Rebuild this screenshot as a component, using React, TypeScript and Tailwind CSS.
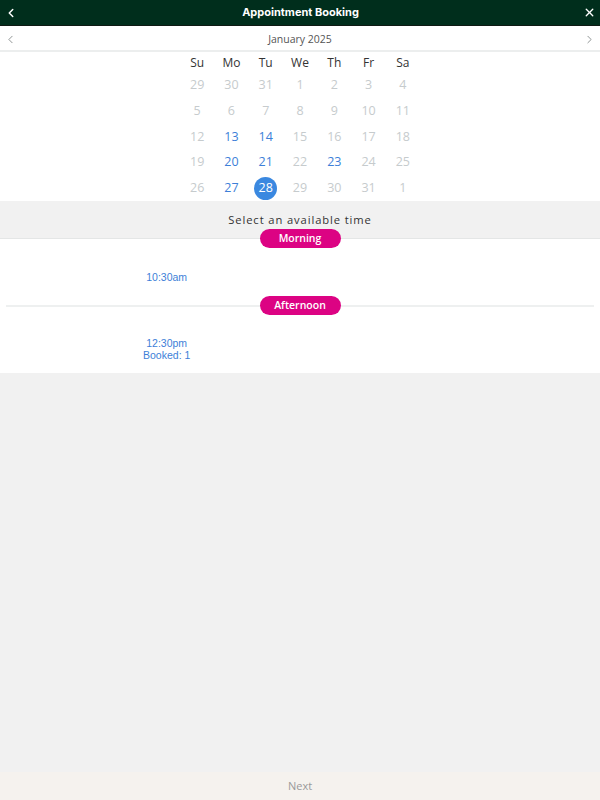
import { ChevronLeft, ChevronRight, X } from "lucide-react";

type Day = { n: number; state: "off" | "open" | "selected" };

const weeks: Day[][] = [
  [29, 30, 31, 1, 2, 3, 4].map((n) => ({ n, state: "off" as const })),
  [5, 6, 7, 8, 9, 10, 11].map((n) => ({ n, state: "off" as const })),
  [12, 13, 14, 15, 16, 17, 18].map((n) => ({
    n,
    state: n === 13 || n === 14 ? ("open" as const) : ("off" as const),
  })),
  [19, 20, 21, 22, 23, 24, 25].map((n) => ({
    n,
    state: [20, 21, 23].includes(n) ? ("open" as const) : ("off" as const),
  })),
  [26, 27, 28, 29, 30, 31, 1].map((n, i) => ({
    n,
    state:
      i === 1 ? ("open" as const) : i === 2 ? ("selected" as const) : ("off" as const),
  })),
];

const weekdays = ["Su", "Mo", "Tu", "We", "Th", "Fr", "Sa"];

const Pill = ({ label }: { label: string }) => (
  <div className="flex justify-center">
    <span className="flex h-[19px] w-[81px] items-center justify-center rounded-full bg-[#dc0383] text-[10.5px] font-semibold text-white [font-family:'Open_Sans',sans-serif]">
      {label}
    </span>
  </div>
);

const App = () => {
  return (
    <div className="flex h-[800px] w-full flex-col bg-[#f1f1f1] [font-family:'Open_Sans',sans-serif]">
      {/* header */}
      <header className="flex h-[26px] items-center justify-between border-b border-[#0f1a14] bg-[#002e1c] px-[4px] text-white">
        <ChevronLeft size={14} strokeWidth={2.5} />
        <h1 className="text-[11px] font-bold [font-family:Inter,sans-serif]">
          Appointment Booking
        </h1>
        <X size={13} strokeWidth={2.5} />
      </header>

      {/* month */}
      <div className="flex h-[26px] items-center justify-between border-b-2 border-[#eceeee] bg-white px-[4px] pt-[3px] text-[#7f8585]">
        <ChevronLeft size={13} strokeWidth={1.6} />
        <span className="text-[10.5px] text-[#555]">January 2025</span>
        <ChevronRight size={13} strokeWidth={1.6} />
      </div>

      {/* calendar */}
      <div className="flex justify-center bg-white pt-[1px]">
        <div className="w-[240px]">
          <div className="grid h-[20px] grid-cols-7 items-center text-center text-[12px] text-[#333]">
            {weekdays.map((d) => (
              <span key={d}>{d}</span>
            ))}
          </div>
          {weeks.map((w, i) => (
            <div key={i} className="grid h-[25.6px] grid-cols-7 items-center text-center text-[12.5px]">
              {w.map((d, j) => (
                <div key={j} className="flex justify-center">
                  {d.state === "selected" ? (
                    <span className="flex h-[23px] w-[23px] items-center justify-center rounded-full bg-[#3a88e0] text-white">
                      {d.n}
                    </span>
                  ) : (
                    <span className={d.state === "open" ? "text-[#3d7fd8]" : "text-[#c6cbcd]"}>
                      {d.n}
                    </span>
                  )}
                </div>
              ))}
            </div>
          ))}
        </div>
      </div>

      {/* time heading */}
      <div className="flex h-[38px] items-center justify-center border-b border-[#e4e6e6] pt-[1px] text-[11.2px] tracking-[0.08em] text-[#333]">
        Select an available time
      </div>

      {/* slots */}
      <div className="bg-white pb-[12px]">
        <div className="-mt-[10px]">
          <Pill label="Morning" />
        </div>
        <div className="mx-auto grid w-[400px] grid-cols-3 pt-[23px] pb-[22px] text-center text-[10.5px] leading-[12px] text-[#3d7fd8] [font-family:'Liberation_Sans',Arial,sans-serif]">
          <span>10:30am</span>
        </div>
        <div className="relative mx-[6px] flex items-center">
          <div className="h-[2px] w-full bg-[#eef0f0]" />
          <div className="absolute inset-x-0">
            <Pill label="Afternoon" />
          </div>
        </div>
        <div className="mx-auto grid w-[400px] grid-cols-3 pt-[30px] text-center text-[10.5px] leading-[12px] text-[#3d7fd8] [font-family:'Liberation_Sans',Arial,sans-serif]">
          <div className="flex flex-col">
            <span>12:30pm</span>
            <span>Booked: 1</span>
          </div>
        </div>
      </div>

      <div className="flex-1" />

      {/* footer */}
      <footer className="flex h-[28px] items-center justify-center bg-[#f5f2ee] text-[11px] text-[#9a9a9a]">
        Next
      </footer>
    </div>
  );
};

export default App;
